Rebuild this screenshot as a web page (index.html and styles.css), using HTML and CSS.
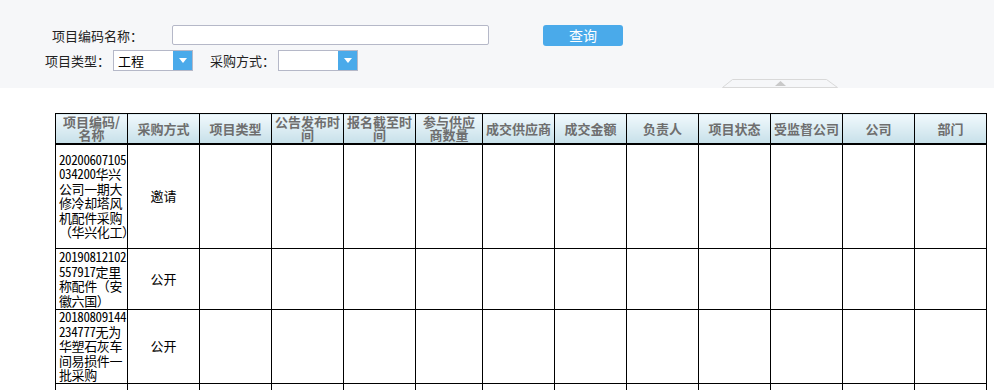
FILE: index.html
```html
<!DOCTYPE html>
<html lang="zh-CN">
<head>
  <meta charset="UTF-8">
  <meta name="viewport" content="width=device-width, initial-scale=1.0">
  <title>采购项目查询</title>
  <link rel="stylesheet" href="styles.css">
</head>
<body>
  <!-- Search Panel -->
  <div class="search-panel">
    <div class="search-row">
      <label class="label label-name">项目编码名称：</label>
      <input type="text" class="text-input name-input">
      <button class="btn-query">查询</button>
    </div>
    <div class="search-row row-second">
      <label class="label label-type">项目类型：</label>
      <div class="combo">
        <span class="combo-text">工程</span>
        <span class="combo-arrow"></span>
      </div>
      <label class="label label-method">采购方式：</label>
      <div class="combo">
        <span class="combo-text"></span>
        <span class="combo-arrow"></span>
      </div>
    </div>
    <div class="collapse-tab">
      <svg width="116" height="9" viewBox="0 0 116 9">
        <polygon points="0.5,8.5 10.5,0.5 104.5,0.5 115.5,8.5" fill="#f6f7f9" stroke="#d9d9d9"/>
        <polygon points="53,7 58.5,2 64,7" fill="#c9c9c9"/>
      </svg>
    </div>
  </div>

  <!-- Result Table -->
  <table class="result-table">
    <colgroup>
      <col class="col-w"><col class="col-w"><col class="col-w"><col class="col-w"><col class="col-w">
      <col class="col-n">
      <col class="col-w"><col class="col-w"><col class="col-w"><col class="col-w"><col class="col-w"><col class="col-w"><col class="col-w">
    </colgroup>
    <thead>
      <tr>
        <th>项目编码/名称</th>
        <th>采购方式</th>
        <th>项目类型</th>
        <th>公告发布时间</th>
        <th>报名截至时间</th>
        <th>参与供应商数量</th>
        <th>成交供应商</th>
        <th>成交金额</th>
        <th>负责人</th>
        <th>项目状态</th>
        <th>受监督公司</th>
        <th>公司</th>
        <th>部门</th>
      </tr>
    </thead>
    <tbody>
      <tr class="row-1">
        <td class="cell-name"><span class="code">20200607105<br>034200</span>华兴<br>公司一期大<br>修冷却塔风<br>机配件采购<br>（华兴化工）</td>
        <td>邀请</td>
        <td></td><td></td><td></td><td></td><td></td><td></td><td></td><td></td><td></td><td></td><td></td>
      </tr>
      <tr class="row-2">
        <td class="cell-name"><span class="code">20190812102<br>557917</span>定里<br>称配件（安<br>徽六国）</td>
        <td>公开</td>
        <td></td><td></td><td></td><td></td><td></td><td></td><td></td><td></td><td></td><td></td><td></td>
      </tr>
      <tr class="row-3">
        <td class="cell-name"><span class="code">20180809144<br>234777</span>无为<br>华塑石灰车<br>间易损件一<br>批采购</td>
        <td>公开</td>
        <td></td><td></td><td></td><td></td><td></td><td></td><td></td><td></td><td></td><td></td><td></td>
      </tr>
      <tr class="row-4">
        <td class="cell-name"></td>
        <td></td>
        <td></td><td></td><td></td><td></td><td></td><td></td><td></td><td></td><td></td><td></td><td></td>
      </tr>
    </tbody>
  </table>
</body>
</html>
```

FILE: styles.css
```css
* {
  box-sizing: border-box;
}

body {
  margin: 0;
  font-family: "Noto Sans CJK SC", "Noto Sans", sans-serif;
  font-size: 13px;
  color: #000;
  background: #fff;
}

/* Search Panel */
.search-panel {
  position: relative;
  height: 88px;
  background: #f6f7f9;
  padding-top: 25px;
}

.search-row {
  display: flex;
  align-items: center;
  height: 21px;
}

.row-second {
  margin-top: 4px;
}

.label {
  color: #222;
  white-space: nowrap;
}

.label-name {
  margin-left: 52px;
  width: 120px;
}

.label-type {
  margin-left: 45px;
  width: 68px;
}

.label-method {
  margin-left: 17px;
  width: 68px;
}

.text-input {
  height: 20px;
  border: 1px solid #b5b8c8;
  border-radius: 2px;
  background: #fff;
  padding: 0 4px;
  font: inherit;
}

.name-input {
  width: 317px;
  margin-top: -1px;
}

.btn-query {
  margin-left: 54px;
  width: 80px;
  height: 21px;
  border: none;
  border-radius: 3px;
  background: #4aaaea;
  color: #fff;
  font: inherit;
  font-size: 14px;
  line-height: 21px;
  padding: 0;
  cursor: pointer;
}

.combo {
  display: flex;
  width: 80px;
  height: 21px;
  border: 1px solid #b5b8c8;
  background: #fff;
}

.combo-text {
  flex: 1;
  padding-left: 4px;
  line-height: 19px;
}

.combo-arrow {
  width: 19px;
  background: #4aaaea;
  display: flex;
  align-items: center;
  justify-content: center;
}

.combo-arrow::after {
  content: "";
  border-left: 4px solid transparent;
  border-right: 4px solid transparent;
  border-top: 5px solid #fff;
}

.collapse-tab {
  position: absolute;
  left: 722px;
  top: 79px;
  height: 9px;
  line-height: 0;
}

/* Result Table */
.result-table {
  width: 932px;
  border-collapse: collapse;
  table-layout: fixed;
  margin: 25px 0 0 55px;
}

.col-w {
  width: 72px;
}

.col-n {
  width: 67px;
}

.result-table th,
.result-table td {
  border: 1px solid #000;
  padding: 0 2px;
  text-align: center;
  vertical-align: middle;
}

.result-table th {
  height: 30px;
  background: linear-gradient(#f1f9fd, #c7e0e9);
  color: #6e6e6e;
  font-weight: bold;
  line-height: 13px;
  border-bottom: 2px solid #000;
}

.result-table td {
  line-height: 14.5px;
}

.row-1 td {
  height: 105px;
}

.row-2 td {
  height: 61px;
}

.row-3 td {
  height: 74px;
}

.row-4 td {
  height: 60px;
}

.result-table .cell-name {
  text-align: left;
  white-space: nowrap;
  letter-spacing: -0.4px;
  padding: 0 1px 0 3px;
}

.cell-name .code {
  font-feature-settings: "hwid";
}
```
